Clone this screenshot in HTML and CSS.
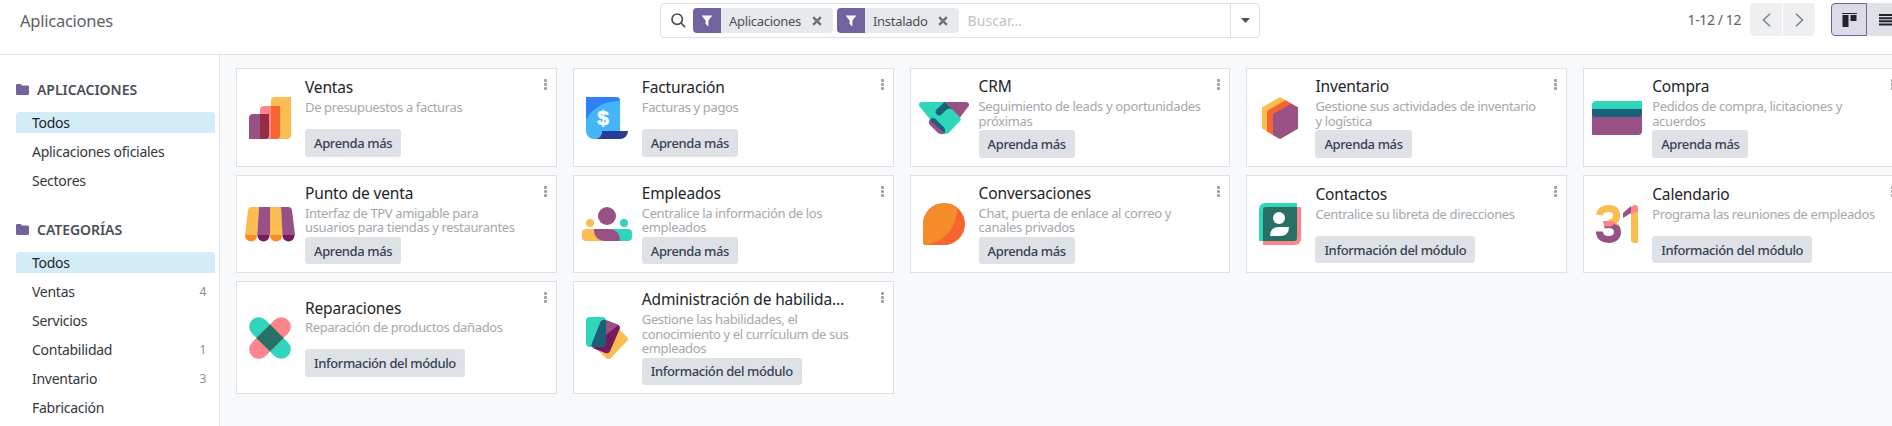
FILE: index.html
```
<!DOCTYPE html>
<html lang="es">
<head>
<meta charset="utf-8">
<title>Aplicaciones</title>
<link rel="stylesheet" href="styles.css">
</head>
<body>
<header class="control-panel">
  <h1 class="breadcrumb">Aplicaciones</h1>
  <div class="search">
    <svg class="search-icon" width="15" height="15" viewBox="0 0 15 15"><circle cx="6.2" cy="6.2" r="5.2"/><path d="M10 10l4 4.2"/></svg>
    <div class="facet"><span class="facet-icon"><svg width="12" height="12" viewBox="0 0 12 12"><path d="M0.6 0.5h10.8L7.4 5.6v6L4.6 9V5.6z"/></svg></span><span class="facet-label">Aplicaciones</span><svg class="facet-close" width="10" height="10" viewBox="0 0 10 10"><path d="M1.2 1.2l7.6 7.6M8.8 1.2L1.2 8.8"/></svg></div>
    <div class="facet"><span class="facet-icon"><svg width="12" height="12" viewBox="0 0 12 12"><path d="M0.6 0.5h10.8L7.4 5.6v6L4.6 9V5.6z"/></svg></span><span class="facet-label">Instalado</span><svg class="facet-close" width="10" height="10" viewBox="0 0 10 10"><path d="M1.2 1.2l7.6 7.6M8.8 1.2L1.2 8.8"/></svg></div>
    <span class="placeholder">Buscar…</span>
    <span class="search-toggle"><svg width="9" height="5" viewBox="0 0 9 5"><path d="M0 0h9L4.5 5z"/></svg></span>
  </div>
  <div class="tools">
    <span class="pager">1-12 / 12</span>
    <div class="pager-buttons">
      <span class="pager-btn first"><svg width="9" height="14" viewBox="0 0 9 14"><path d="M8 0.7L1.5 7 8 13.3"/></svg></span>
      <span class="pager-btn last"><svg width="9" height="14" viewBox="0 0 9 14"><path d="M1 0.7L7.5 7 1 13.3"/></svg></span>
    </div>
    <div class="views">
      <span class="view-btn active"><svg width="15" height="14" viewBox="0 0 15 14"><path d="M0 0h15v1H0zM0.5 2h6v12h-6zM8.5 2h6v6h-6z"/></svg></span>
      <span class="view-btn list"><svg width="16" height="12" viewBox="0 0 16 12"><path d="M0 0h16v2H0zM0 3.2h16v2H0zM0 6.3h16v2H0zM0 9.5h16v2H0z"/></svg></span>
    </div>
  </div>
</header>
<div class="content">
  <aside class="sidebar">
    <section class="group">
      <h2 class="group-title"><svg width="13" height="11" viewBox="0 0 13 11"><path d="M1.2 0h3.3q1.2 0 1.2 1.6h6q1.3 0 1.3 1.2v7q0 1.2-1.2 1.2H1.2Q0 11 0 9.8V1.2Q0 0 1.2 0z"/></svg>APLICACIONES</h2>
      <div class="item selected">Todos</div>
      <div class="item">Aplicaciones oficiales</div>
      <div class="item">Sectores</div>
    </section>
    <section class="group">
      <h2 class="group-title"><svg width="13" height="11" viewBox="0 0 13 11"><path d="M1.2 0h3.3q1.2 0 1.2 1.6h6q1.3 0 1.3 1.2v7q0 1.2-1.2 1.2H1.2Q0 11 0 9.8V1.2Q0 0 1.2 0z"/></svg>CATEGORÍAS</h2>
      <div class="item selected">Todos</div>
      <div class="item">Ventas<span class="count">4</span></div>
      <div class="item">Servicios</div>
      <div class="item">Contabilidad<span class="count">1</span></div>
      <div class="item">Inventario<span class="count">3</span></div>
      <div class="item">Fabricación</div>
    </section>
  </aside>
  <main class="kanban">
    <article class="card">
      <svg class="app-icon" viewBox="0 0 50 50"><path fill="#fbbd4f" d="M26 8a4 4 0 0 1 4-4h16v38a4 4 0 0 1-4 4H26z"/><path fill="#fc868b" d="M15 17a4 4 0 0 1 4-4h16v29a4 4 0 0 1-4 4H15z"/><path fill="#f86430" d="M26 13h9v29a4 4 0 0 1-4 4h-5z"/><path fill="#985184" d="M4 25a4 4 0 0 1 4-4h16v21a4 4 0 0 1-4 4H4z"/><path fill="#962b48" d="M15 21h9v21a4 4 0 0 1-4 4h-5z"/></svg>
      <div class="info"><h3 class="name">Ventas</h3><p class="desc">De presupuestos a facturas</p><span class="btn">Aprenda más</span></div>
      <span class="kebab"><i></i><i></i><i></i></span>
    </article>
    <article class="card">
      <svg class="app-icon" viewBox="0 0 50 50"><path fill="#2f80f5" d="M4 4h30a4 4 0 0 1 4 4v20H4z"/><path fill="#45b5fa" d="M4 27C10 15 22 8 38 8v30H20q0 8-8 8a8 8 0 0 1-8-8z"/><path fill="#283e96" d="M20 38h26a8 8 0 0 1-8 8H12c5 0 8-3 8-8z"/><text class="dollar" x="21" y="32">$</text></svg>
      <div class="info"><h3 class="name">Facturación</h3><p class="desc">Facturas y pagos</p><span class="btn">Aprenda más</span></div>
      <span class="kebab"><i></i><i></i><i></i></span>
    </article>
    <article class="card">
      <svg class="app-icon" viewBox="0 0 50 50"><path fill="#2fd6bb" d="M3 9h23l15 15q1.500 2 0 4L30 39.500Q28 41 26 41h-3L1 14C-1 11.500 0 9 3 9z"/><path fill="#985184" d="M26 9h21c3 0 4 3 2 5l-8 10.500z"/><path fill="#1a6078" d="M25.500 9H26l8 8q-4-3-7 0l-4 4a3.500 3.500 0 0 1-5.500-4.500z"/><path fill="#985184" d="M11 26.500q-2.500 2.500 0 5.500l8 8q2 1.500 5 1 2-1 2-3L14 25z"/><path fill="#1a6078" d="M11.500 26q2.500-2 5 0l9 9q1.500 3 0 5L11.500 28z"/></svg>
      <div class="info"><h3 class="name">CRM</h3><p class="desc">Seguimiento de leads y oportunidades<br>próximas</p><span class="btn">Aprenda más</span></div>
      <span class="kebab"><i></i><i></i><i></i></span>
    </article>
    <article class="card">
      <svg class="app-icon" viewBox="0 0 50 50"><path fill="#fbbd4f" d="M25 4l18 10.500v21L25 46 7 35.500v-21z"/><path fill="#f86430" d="M30.500 7.200L43 14.500v21L25 46 12 38.400V18z"/><path fill="#985184" d="M36 10.800l7 3.700v21L25 46l-7-4V21.200z"/></svg>
      <div class="info"><h3 class="name">Inventario</h3><p class="desc">Gestione sus actividades de inventario<br>y logística</p><span class="btn">Aprenda más</span></div>
      <span class="kebab"><i></i><i></i><i></i></span>
    </article>
    <article class="card">
      <svg class="app-icon" viewBox="0 0 50 50"><path fill="#985184" d="M0 16h50v22a4 4 0 0 1-4 4H0z"/><path fill="#2fd6bb" d="M0 12a4 4 0 0 1 4-4h46v8H0z"/><path fill="#1a6078" d="M0 16h50v4a4 4 0 0 1-4 4H4a4 4 0 0 1-4-4z"/></svg>
      <div class="info"><h3 class="name">Compra</h3><p class="desc">Pedidos de compra, licitaciones y<br>acuerdos</p><span class="btn">Aprenda más</span></div>
      <span class="kebab"><i></i><i></i><i></i></span>
    </article>
    <article class="card">
      <svg class="app-icon" viewBox="0 0 50 50"><g fill="#f78b28"><circle cx="6" cy="36.500" r="6"/><circle cx="31" cy="36.500" r="6"/></g><g fill="#761b5b"><circle cx="18.500" cy="36.500" r="6"/><circle cx="43.500" cy="36.500" r="6"/></g><path fill="#fbbd4f" d="M7 8h7l-2 28H0L3 11q.5-3 4-3zM25 8h11l2 28H25z"/><path fill="#985184" d="M14 8h11v28H12.200zM36 8h7q3.500 0 4 3l3 25H37.500z"/></svg>
      <div class="info"><h3 class="name">Punto de venta</h3><p class="desc">Interfaz de TPV amigable para<br>usuarios para tiendas y restaurantes</p><span class="btn">Aprenda más</span></div>
      <span class="kebab"><i></i><i></i><i></i></span>
    </article>
    <article class="card">
      <svg class="app-icon" viewBox="0 0 50 50"><circle cx="25" cy="17" r="9" fill="#985184"/><circle cx="8" cy="24" r="4" fill="#fbbd4f"/><circle cx="42" cy="24" r="4" fill="#2fd6bb"/><rect x="0" y="30" width="30" height="12" rx="4" fill="#fbbd4f"/><rect x="20" y="30" width="30" height="12" rx="4" fill="#2fd6bb"/><path fill="#985184" d="M12 30h14q12 0 12 12H24Q12 42 12 30z"/></svg>
      <div class="info"><h3 class="name">Empleados</h3><p class="desc">Centralice la información de los<br>empleados</p><span class="btn">Aprenda más</span></div>
      <span class="kebab"><i></i><i></i><i></i></span>
    </article>
    <article class="card">
      <svg class="app-icon" viewBox="0 0 50 50"><path fill="#f86430" d="M4 25a21 21 0 1 1 21 21H7a3 3 0 0 1-3-3z"/><path fill="#f58b2a" d="M4 25A21 21 0 0 1 38.300 9C38 28 26 43 6 46q-2-1-2-3z"/></svg>
      <div class="info"><h3 class="name">Conversaciones</h3><p class="desc">Chat, puerta de enlace al correo y<br>canales privados</p><span class="btn">Aprenda más</span></div>
      <span class="kebab"><i></i><i></i><i></i></span>
    </article>
    <article class="card">
      <svg class="app-icon" viewBox="0 0 50 50"><path fill="#2fd6bb" d="M4 10a6 6 0 0 1 6-6h32v38H4z"/><path fill="#fc868b" d="M8 8h38v32a6 6 0 0 1-6 6H8z"/><path fill="#2fd6bb" d="M8 8h6v6H8z"/><path fill="#fc868b" d="M36 36h6v6h-6z"/><path fill="#267066" d="M8 11a3 3 0 0 1 3-3h31v31a3 3 0 0 1-3 3H8z"/><circle cx="24" cy="19" r="6" fill="#fff"/><path fill="#fff" d="M15 37q0-9 9-9h10q0 9-9 9z"/></svg>
      <div class="info"><h3 class="name">Contactos</h3><p class="desc">Centralice su libreta de direcciones</p><span class="btn">Información del módulo</span></div>
      <span class="kebab"><i></i><i></i><i></i></span>
    </article>
    <article class="card">
      <svg class="app-icon" viewBox="0 0 50 50"><g fill="none" stroke-width="7"><path stroke="#fbbd4f" d="M7.500 16C8 11.500 12 9.500 16.500 9.500c5 0 8 2 8 6.500s-3 8-8 8"/><path stroke="#985184" d="M12 26c9-2 13.500 2 13.500 7s-4 7.500-9 7.500c-5 0-9-2.500-9-8"/></g><path fill="#fbbd4f" d="M22 18l6-2q.5 5-3.500 8l2 3-6-3z"/><path fill="#fc868b" d="M12 24.500Q12 22 15 22h4q3 0 4.500 2L19 27.500h-5q-2 0-2-2z"/><path fill="#fbbd4f" d="M39 12h7v32h-3q-4 0-4-3z"/><path fill="#985184" d="M31 14l8-7v7l-8 5z"/><path fill="#fc868b" d="M39 8q2-2 4-2 3 0 3 3v3.500L39 15z"/></svg>
      <div class="info"><h3 class="name">Calendario</h3><p class="desc">Programa las reuniones de empleados</p><span class="btn">Información del módulo</span></div>
      <span class="kebab"><i></i><i></i><i></i></span>
    </article>
    <article class="card">
      <svg class="app-icon" viewBox="0 0 50 50"><g transform="rotate(45 25 25)"><rect x="-0.500" y="15.400" width="51" height="19.200" rx="9.600" fill="#2fd6bb"/><rect x="15.400" y="-0.500" width="19.200" height="51" rx="9.600" fill="#fc868b"/><rect x="15.400" y="15.400" width="19.200" height="19.200" fill="#267066"/></g></svg>
      <div class="info"><h3 class="name">Reparaciones</h3><p class="desc">Reparación de productos dañados</p><span class="btn">Información del módulo</span></div>
      <span class="kebab"><i></i><i></i><i></i></span>
    </article>
    <article class="card">
      <svg class="app-icon" viewBox="0 0 50 50"><path fill="#fbbd4f" d="M37 16l8 8q2 2 0 4L29 45q-3 2-5 0l-9-9z"/><rect x="4" y="4" width="20" height="30" rx="4" fill="#2fd6bb"/><path fill="#985184" d="M23.500 7l12 4.500q3 1.500 2 4.500L28 38q-1.500 3-4.500 2L12 35.500q-3-1.500-2-4.500L18.500 9q1.500-3 5-2z"/><path fill="#761b5b" d="M24 22L36 12q2.500 1.500 1.500 4L28 38q-1.500 3-4.500 2L12 35.500l2-3z"/><path fill="#985184" d="M24 7.200l11.500 4.300.5.500L24 22z"/><path fill="#1a6078" d="M24 7.500V30q0 4-4 4H10q-1-1-.3-3L18.500 9q1.500-3 5.500-1.500z"/></svg>
      <div class="info"><h3 class="name">Administración de habilida…</h3><p class="desc">Gestione las habilidades, el<br>conocimiento y el currículum de sus<br>empleados</p><span class="btn">Información del módulo</span></div>
      <span class="kebab"><i></i><i></i><i></i></span>
    </article>
  </main>
</div>
</body>
</html>
```
FILE: styles.css
```
* { box-sizing: border-box; }

body {
  margin: 0;
  height: 426px;
  overflow: hidden;
  display: flex;
  flex-direction: column;
  background: #fff;
  color: #374151;
  font-family: "Noto Sans", "Open Sans", sans-serif;
  font-size: 14px;
}

h1, h2, h3, p { margin: 0; font-weight: 400; }
svg { display: block; flex: none; }

.control-panel {
  flex: none;
  height: 55px;
  padding-top: 3px;
  border-bottom: 1px solid #dee2e6;
  display: grid;
  grid-template-columns: 660px 600px 632px;
  align-items: start;
}
.breadcrumb {
  padding-left: 20px;
  font-size: 16.5px;
  letter-spacing: -0.25px;
  line-height: 35px;
  color: #5b626a;
}
.search {
  height: 35px;
  display: flex;
  align-items: center;
  border: 1px solid #dee2e6;
  border-radius: 4px;
  padding-left: 10px;
}
.search-icon { margin-right: 7px; fill: none; stroke: #495057; stroke-width: 1.7; }
.facet {
  height: 25px;
  margin-right: 4px;
  padding-right: 11px;
  display: flex;
  align-items: center;
  background: #e7eaed;
  border-radius: 4px;
  overflow: hidden;
}
.facet-icon {
  width: 28px;
  height: 25px;
  display: grid;
  place-items: center;
  background: #71639e;
}
.facet-icon svg { fill: #fff; }
.facet-label { padding: 0 11px 0 8px; font-size: 13px; letter-spacing: -0.3px; color: #495057; white-space: nowrap; }
.facet-close { stroke: #6a7077; stroke-width: 2.4; }
.placeholder { padding-left: 4px; font-size: 14px; letter-spacing: 0.1px; color: #bcc3c9; }
.search-toggle {
  width: 29px;
  height: 33px;
  margin-left: auto;
  display: grid;
  place-items: center;
  border-left: 1px solid #dee2e6;
}
.search-toggle svg { fill: #495057; }

.tools { display: flex; align-items: center; justify-content: flex-end; overflow: hidden; height: 33px; }
.pager { font-size: 14px; letter-spacing: -0.4px; color: #5b626a; white-space: nowrap; }
.pager-buttons { display: flex; gap: 1px; margin: 0 16px 0 9px; }
.pager-btn {
  width: 32px;
  height: 33px;
  display: grid;
  place-items: center;
  background: #eeeff1;
}
.pager-btn svg { fill: none; stroke: #7f868c; stroke-width: 1.6; }
.first { border-radius: 4px 0 0 4px; }
.last { border-radius: 0 4px 4px 0; }
.views { display: flex; }
.view-btn { height: 33px; display: grid; place-items: center; background: #dee2e6; }
.view-btn svg { fill: #212529; }
.active {
  width: 36px;
  background: #dddae8;
  border: 1px solid #71639e;
  border-radius: 4px 0 0 4px;
}
.list { width: 25px; justify-items: start; padding-left: 12px; overflow: hidden; }

.content { flex: 1; display: flex; min-height: 0; }
.sidebar {
  flex: none;
  width: 220px;
  padding: 23px 4px 0 16px;
  border-right: 1px solid #dee2e6;
  overflow: hidden;
}
.group { height: 140px; }
.group-title {
  height: 22px;
  margin-bottom: 12px;
  display: flex;
  align-items: center;
  gap: 8px;
  font-size: 14px;
  font-weight: 600;
  letter-spacing: -0.05px;
  color: #495057;
}
.group-title svg { fill: #71639e; }
.item {
  height: 21px;
  margin-bottom: 8px;
  padding: 0 9px 0 16px;
  display: flex;
  align-items: center;
  justify-content: space-between;
  line-height: 21px;
  letter-spacing: -0.27px;
  color: #33383d;
}
.selected { background: #d4ebf8; border-radius: 4px 4px 0 0; color: #212529; }
.count { font-size: 12px; color: #868d94; }

.kanban {
  flex: none;
  width: 1684px;
  padding: 13.4px 0 0 16px;
  display: grid;
  grid-template-columns: repeat(5, 320.8px);
  grid-auto-rows: max-content;
  gap: 8px 16px;
  background: #f8f9fb;
}
.card {
  display: flex;
  align-items: center;
  padding: 8px;
  background: #fff;
  border: 1px solid #dee2e6;
}
.app-icon { width: 50px; height: 50px; margin-right: 10px; }
.dollar { font: 700 21px "Liberation Sans", sans-serif; fill: #fff; stroke: #fff; stroke-width: 0.5; text-anchor: middle; }
.info { flex: 1; min-width: 0; }
.name {
  height: 21.9px;
  font-size: 15.5px;
  letter-spacing: -0.15px;
  line-height: 18.4px;
  color: #212529;
  white-space: nowrap;
}
.desc {
  min-height: 29px;
  padding-bottom: 2.5px;
  font-size: 13px;
  letter-spacing: -0.36px;
  line-height: 14.3px;
  color: #a5a8ab;
  white-space: nowrap;
}
.btn {
  display: inline-flex;
  align-items: center;
  height: 27.5px;
  vertical-align: top;
  padding: 0 9px;
  background: #dee2e6;
  border-radius: 3px;
  font-size: 13px;
  font-weight: 500;
  letter-spacing: -0.38px;
  color: #374151;
  white-space: nowrap;
}
.kebab {
  align-self: flex-start;
  display: grid;
  gap: 1px;
  padding: 2px 1px 0 0;
}
.kebab i { width: 3px; height: 3px; border-radius: 1px; background: #9da1a6; }
```
